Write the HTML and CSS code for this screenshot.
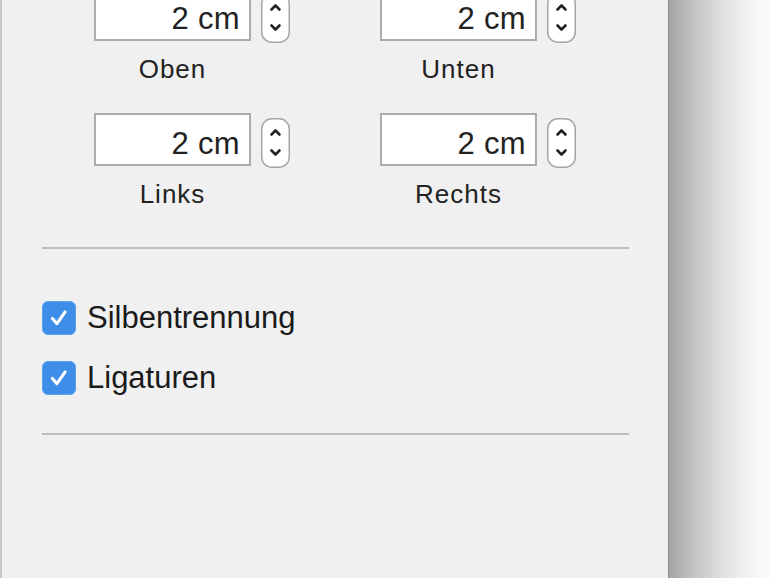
FILE: index.html
```html
<!DOCTYPE html>
<html>
	<head>
		<meta charset="UTF-8">
		<meta name="viewport" content="width=device-width, initial-scale=1">
		<title>Dokument</title>
		<link rel="stylesheet" href="styles.css">
	</head>
	<body>
		<div class="screen">
			<div class="panel">

				<div class="margins">
					<div class="margin-group">
						<div class="margin-row">
							<div class="margin-input">2 cm</div>
							<div class="stepper">
								<svg width="29" height="50" viewBox="0 0 29 50">
									<rect x="0.75" y="0.75" width="27.5" height="48.5" rx="10" fill="#fff" stroke="#a6a6a6" stroke-width="1.5"/>
									<path d="M10.5 16.5 L14.5 12.5 L18.5 16.5" fill="none" stroke="#222" stroke-width="2.6" stroke-linecap="round" stroke-linejoin="round"/>
									<path d="M10.5 32.5 L14.5 36.5 L18.5 32.5" fill="none" stroke="#222" stroke-width="2.6" stroke-linecap="round" stroke-linejoin="round"/>
								</svg>
							</div>
						</div>
						<div class="margin-label">Oben</div>
					</div>

					<div class="margin-group">
						<div class="margin-row">
							<div class="margin-input">2 cm</div>
							<div class="stepper">
								<svg width="29" height="50" viewBox="0 0 29 50">
									<rect x="0.75" y="0.75" width="27.5" height="48.5" rx="10" fill="#fff" stroke="#a6a6a6" stroke-width="1.5"/>
									<path d="M10.5 16.5 L14.5 12.5 L18.5 16.5" fill="none" stroke="#222" stroke-width="2.6" stroke-linecap="round" stroke-linejoin="round"/>
									<path d="M10.5 32.5 L14.5 36.5 L18.5 32.5" fill="none" stroke="#222" stroke-width="2.6" stroke-linecap="round" stroke-linejoin="round"/>
								</svg>
							</div>
						</div>
						<div class="margin-label">Unten</div>
					</div>

					<div class="margin-group">
						<div class="margin-row">
							<div class="margin-input">2 cm</div>
							<div class="stepper">
								<svg width="29" height="50" viewBox="0 0 29 50">
									<rect x="0.75" y="0.75" width="27.5" height="48.5" rx="10" fill="#fff" stroke="#a6a6a6" stroke-width="1.5"/>
									<path d="M10.5 16.5 L14.5 12.5 L18.5 16.5" fill="none" stroke="#222" stroke-width="2.6" stroke-linecap="round" stroke-linejoin="round"/>
									<path d="M10.5 32.5 L14.5 36.5 L18.5 32.5" fill="none" stroke="#222" stroke-width="2.6" stroke-linecap="round" stroke-linejoin="round"/>
								</svg>
							</div>
						</div>
						<div class="margin-label">Links</div>
					</div>

					<div class="margin-group">
						<div class="margin-row">
							<div class="margin-input">2 cm</div>
							<div class="stepper">
								<svg width="29" height="50" viewBox="0 0 29 50">
									<rect x="0.75" y="0.75" width="27.5" height="48.5" rx="10" fill="#fff" stroke="#a6a6a6" stroke-width="1.5"/>
									<path d="M10.5 16.5 L14.5 12.5 L18.5 16.5" fill="none" stroke="#222" stroke-width="2.6" stroke-linecap="round" stroke-linejoin="round"/>
									<path d="M10.5 32.5 L14.5 36.5 L18.5 32.5" fill="none" stroke="#222" stroke-width="2.6" stroke-linecap="round" stroke-linejoin="round"/>
								</svg>
							</div>
						</div>
						<div class="margin-label">Rechts</div>
					</div>
				</div>

				<div class="divider"></div>

				<div class="options">
					<div class="option">
						<span class="checkbox">
							<svg width="34" height="34" viewBox="0 0 34 34">
								<path d="M10 17.5 L14.8 23 L23.5 10.5" fill="none" stroke="#fff" stroke-width="3.2" stroke-linecap="round" stroke-linejoin="round"/>
							</svg>
						</span>
						<span class="option-text">Silbentrennung</span>
					</div>
					<div class="option">
						<span class="checkbox">
							<svg width="34" height="34" viewBox="0 0 34 34">
								<path d="M10 17.5 L14.8 23 L23.5 10.5" fill="none" stroke="#fff" stroke-width="3.2" stroke-linecap="round" stroke-linejoin="round"/>
							</svg>
						</span>
						<span class="option-text">Ligaturen</span>
					</div>
				</div>

				<div class="divider"></div>

			</div>
			<div class="shadow"></div>
		</div>
	</body>
</html>
```

FILE: styles.css
```css
* {
	box-sizing: border-box;
	margin: 0;
	padding: 0;
}
body, html {
	height: 100%;
	background: #fafafa;
	overflow: hidden;
	font-family: 'Liberation Sans', Arial, sans-serif;
	color: #222;
}
.screen {
	display: flex;
	height: 578px;
}
.panel {
	width: 669px;
	background: #f0f0f0;
	border-left: 2px solid #c9c9c9;
	border-right: 1px solid #8c8c8c;
	padding-left: 40px;
}
.shadow {
	flex: 1;
	background: linear-gradient(to right, #a3a3a3, #c4c4c4 25%, #e2e2e2 55%, #f6f6f6 85%, #fbfbfb);
}

/* page margins */
.margins {
	display: grid;
	grid-template-columns: 196px 196px;
	column-gap: 90px;
	row-gap: 29px;
	margin-top: -12px;
	padding-left: 52px;
}
.margin-row {
	display: flex;
	align-items: flex-start;
}
.margin-input {
	width: 157px;
	height: 53px;
	background: #fff;
	border: 2px solid #acacac;
	font-size: 31px;
	line-height: 30px;
	text-align: right;
	padding: 14px 9px 0 0;
	letter-spacing: 0.3px;
}
.stepper {
	margin-left: 10px;
	margin-top: 5px;
	height: 50px;
}
.stepper svg {
	display: block;
}
.margin-label {
	width: 157px;
	margin-top: 11px;
	height: 30px;
	line-height: 30px;
	font-size: 26px;
	letter-spacing: 1px;
	text-align: center;
	color: #222;
}

.divider {
	width: 587px;
	height: 2px;
	background: #bcbcbc;
	margin-top: 38px;
}

/* checkboxes */
.options {
	padding-top: 52px;
	display: flex;
	flex-direction: column;
	gap: 26px;
}
.option {
	display: flex;
	align-items: center;
	height: 34px;
}
.checkbox {
	width: 34px;
	height: 34px;
	border-radius: 6px;
	background: #3e8ee9;
	border: 1px solid #5aa0ee;
	display: flex;
	align-items: center;
	justify-content: center;
}
.checkbox svg {
	display: block;
}
.option-text {
	margin-left: 11px;
	font-size: 31px;
	color: #1a1a1a;
}
```
